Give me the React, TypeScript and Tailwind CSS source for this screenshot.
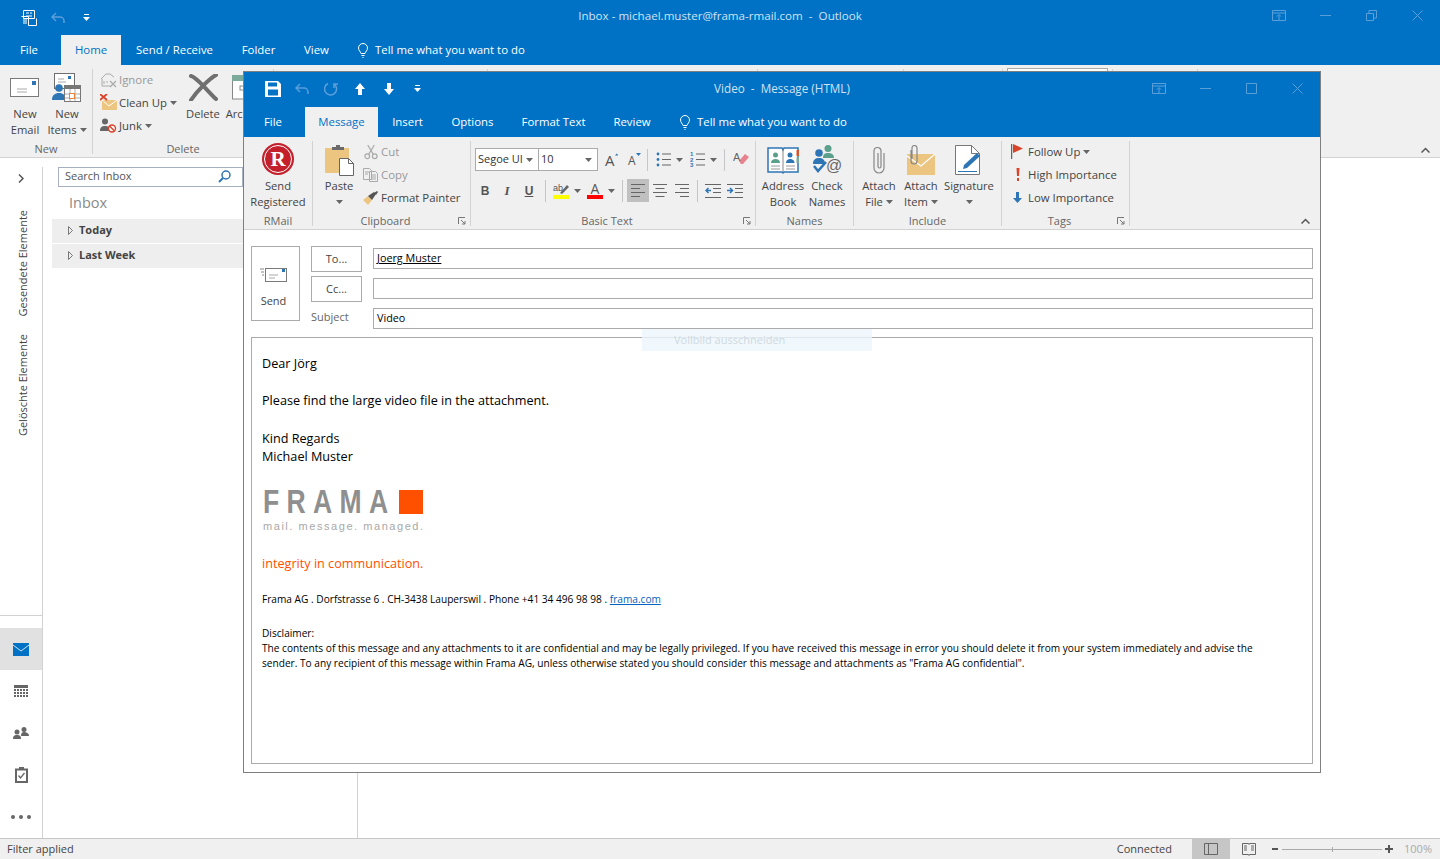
import type { ReactNode } from 'react'

const font = "font-['Open_Sans','Noto_Sans',sans-serif]"

function Caret({ className = 'text-[#666]' }: { className?: string }) {
  return (
    <svg width="7" height="4" viewBox="0 0 7 4" className={`inline-block shrink-0 ${className}`}>
      <path d="M0 0h7L3.500 4z" fill="currentColor" />
    </svg>
  )
}

function Bulb() {
  return (
    <svg width="10" height="15" viewBox="0 0 10 15" fill="none" stroke="#fff" strokeWidth="1">
      <path d="M3 10.500C2.500 8.500.5 7.500.5 5a4.500 4.500 0 019 0c0 2.500-2 3.500-2.500 5.500zM3.500 12.500h3M4.500 14.500h1" />
    </svg>
  )
}

function WinControls({ restore }: { restore?: boolean }) {
  return (
    <div className="flex items-center text-[#5b9fd9]">
      <svg width="14" height="11" viewBox="0 0 14 11" fill="none" stroke="currentColor" className="mr-[34px]">
        <path d="M.5.500h13v10H.500zM.5 3h13M7 10V5M5 6.500l2-2 2 2" />
      </svg>
      <svg width="11" height="1" viewBox="0 0 11 1" className="mr-[35px]"><path d="M0 .5h11" stroke="currentColor" /></svg>
      {restore ? (
        <svg width="11" height="11" viewBox="0 0 11 11" fill="none" stroke="currentColor" className="mr-[35px]">
          <path d="M.5 3.500h7v7h-7zM3 3.500V.5h7.500v7.500H7.500" />
        </svg>
      ) : (
        <svg width="11" height="11" viewBox="0 0 11 11" fill="none" stroke="currentColor" className="mr-[35px]">
          <path d="M.5.500h10v10H.500z" />
        </svg>
      )}
      <svg width="11" height="11" viewBox="0 0 11 11" fill="none" stroke="currentColor">
        <path d="M.5.500l10 10M10.500.500l-10 10" />
      </svg>
    </div>
  )
}

function Tab({ w, active, children }: { w: string; active?: boolean; children: ReactNode }) {
  return (
    <div
      className={`${w} flex h-full items-center justify-center whitespace-nowrap text-[11.4px] ${
        active ? 'bg-[#f0f0f0] text-[#0072c6]' : 'text-white'
      }`}
    >
      {children}
    </div>
  )
}

function TellMe({ pl }: { pl: string }) {
  return (
    <div className={`${pl} flex h-full items-center gap-[7px] whitespace-nowrap text-[11.4px] text-white`}>
      <Bulb />
      <span>Tell me what you want to do</span>
    </div>
  )
}

function Group({
  w,
  label,
  launcher,
  children,
}: {
  w: string
  label?: string
  launcher?: boolean
  children?: ReactNode
}) {
  return (
    <div className={`${w} flex h-full shrink-0 flex-col border-r border-[#d2d2d2]`}>
      <div className="flex min-h-0 flex-1">{children}</div>
      <div className="flex h-[10px] items-center justify-center whitespace-nowrap text-[11px] text-[#666]">
        <span className="flex-1 text-center">{label}</span>
        {launcher && (
          <svg width="8" height="8" viewBox="0 0 8 8" fill="none" stroke="#777" className="mr-[4px] shrink-0">
            <path d="M.5 7V.5H7M3 3l4 4M7 4v3H4" />
          </svg>
        )}
      </div>
    </div>
  )
}

function Big({
  w,
  icon,
  lines,
  caret,
  className = '',
}: {
  w: string
  icon: ReactNode
  lines: string[]
  caret?: boolean
  className?: string
}) {
  return (
    <div className={`${w} ${className} flex shrink-0 flex-col items-center text-[11.2px] leading-[16px] text-[#444]`}>
      <div className="flex h-[37px] items-center justify-center">{icon}</div>
      {lines.map((l, i) => (
        <div key={l} className="flex items-center gap-[3px] whitespace-nowrap">
          {l}
          {caret && i === lines.length - 1 && <Caret />}
        </div>
      ))}
    </div>
  )
}

function Small({
  icon,
  label,
  caret,
  muted,
}: {
  icon: ReactNode
  label: string
  caret?: boolean
  muted?: boolean
}) {
  return (
    <div className={`flex h-[23px] items-center whitespace-nowrap text-[11.4px] ${muted ? 'text-[#999]' : 'text-[#444]'}`}>
      <div className="flex w-[19px] shrink-0 items-center justify-center">{icon}</div>
      <span className="ml-[1px]">{label}</span>
      {caret && <Caret className="ml-[3px] text-[#666]" />}
    </div>
  )
}

const IconEnvelope = (
  <svg width="30" height="20" viewBox="0 0 30 20">
    <rect x=".5" y=".5" width="28" height="18" fill="#fff" stroke="#7a7a7a" />
    <rect x="22" y="3" width="4" height="4" fill="#2e75b6" />
    <path d="M7 11h10M7 14h10" stroke="#aaa" />
  </svg>
)

const IconNewItems = (
  <svg width="30" height="30" viewBox="0 0 30 30">
    <rect x="2.500" y=".5" width="20" height="15" fill="#fff" stroke="#6f6f6f" />
    <rect x="16" y="3" width="3" height="3" fill="#2e75b6" />
    <path d="M6 6h6M6 9h8" stroke="#aaa" />
    <circle cx="7" cy="15" r="3.800" fill="#2e75b6" />
    <path d="M0 27c0-5 3-7 7-7s7 2 7 7z" fill="#2e75b6" />
    <rect x="12.500" y="12.500" width="16" height="16" fill="#fff" stroke="#777" />
    <rect x="12" y="12" width="17" height="4" fill="#777" />
    <path d="M18 16v12M23 16v12M13 21h15M13 25h15" stroke="#aaa" />
    <rect x="17.500" y="20.500" width="5" height="5" fill="#fff" stroke="#e8813a" />
  </svg>
)

const IconDeleteX = (
  <svg width="29" height="27" viewBox="0 0 29 27">
    <path d="M2 2c6 1 18 17 25 23M27 1C20 5 8 17 2 26" fill="none" stroke="#6f6f6f" strokeWidth="4" strokeLinecap="round" />
  </svg>
)

const IconArchive = (
  <svg width="26" height="25" viewBox="0 0 26 25">
    <rect x=".5" y="5" width="25" height="19" fill="#fff" stroke="#888" />
    <rect width="26" height="6" fill="#7ba99a" />
    <rect x="8" y="11" width="8" height="4" fill="none" stroke="#888" />
  </svg>
)

const IconIgnore = (
  <svg width="17" height="16" viewBox="0 0 17 16" fill="none" stroke="#aaa">
    <path d="M1 7l5-5h4l4 3M2 7v7h8M4 9v3M6 10h2" />
    <path d="M10 9l6 6M16 9l-6 6" strokeWidth="1.300" />
  </svg>
)

const IconCleanUp = (
  <svg width="17" height="17" viewBox="0 0 17 17">
    <rect x="2" y="6" width="15" height="10" fill="#ecc581" />
    <path d="M2 6l7 6 8-6" fill="none" stroke="#fff" />
    <path d="M0 0l7 6M7 0L0 6" stroke="#d9442b" strokeWidth="1.800" />
  </svg>
)

const IconJunk = (
  <svg width="17" height="15" viewBox="0 0 17 15">
    <circle cx="5" cy="3.500" r="3" fill="#666" />
    <path d="M0 13c0-4 2-5 5-5s5 1 5 5z" fill="#666" />
    <circle cx="12" cy="10.500" r="3.500" fill="#fff" stroke="#d9442b" strokeWidth="1.400" />
    <path d="M9.500 8l5 5" stroke="#d9442b" strokeWidth="1.400" />
  </svg>
)

const IconRMail = (
  <svg width="32" height="32" viewBox="0 0 32 32" className="mt-[-2px]">
    <circle cx="16" cy="16" r="16" fill="#c4202c" />
    <circle cx="16" cy="16" r="13.500" fill="none" stroke="#fff" />
    <text x="16" y="23" textAnchor="middle" fontFamily="Liberation Serif" fontWeight="700" fontSize="21" fill="#fff">
      R
    </text>
  </svg>
)

const IconPaste = (
  <svg width="29" height="32" viewBox="0 0 29 32">
    <rect y="4" width="24" height="25" fill="#ecc581" />
    <path d="M7 6V3h4V1h4v2h4v3z" fill="#6a6a6a" />
    <path d="M14.500 14.500h9l5 5v12h-14z" fill="#fff" stroke="#666" />
    <path d="M23.500 14.500v5h5" fill="none" stroke="#666" />
  </svg>
)

const IconCut = (
  <svg width="14" height="16" viewBox="0 0 15 16" fill="none" stroke="#aaa" strokeWidth="1.300">
    <circle cx="3.500" cy="12.500" r="2.500" />
    <circle cx="11.500" cy="12.500" r="2.500" />
    <path d="M5 10.500L11 .5M10 10.500L4 .5" />
  </svg>
)

const IconCopy = (
  <svg width="15" height="14" viewBox="0 0 15 14" fill="none" stroke="#aaa">
    <path d="M.5.500h6l2 2v9h-8zM6.500 3.500h6l2 2v8h-8zM2 4h4M2 6h3M8 7h5M8 9h5M8 11h5" />
  </svg>
)

const IconBrush = (
  <svg width="15" height="14" viewBox="0 0 15 14">
    <path d="M0 9l5-4 4 4-4 5z" fill="#ecc581" />
    <path d="M5 5l6-4 2 2-4 6z" fill="#555" />
    <path d="M11 2l3-2 1 1-2 3z" fill="#555" />
  </svg>
)

function Bullets({ numbered }: { numbered?: boolean }) {
  return (
    <svg width="15" height="15" viewBox="0 0 15 15">
      {[2, 7.500, 13].map((y, i) => (
        <g key={y}>
          {numbered ? (
            <text x="0" y={y + 2} fontFamily="Liberation Sans" fontWeight="700" fontSize="6" fill="#2e75b6">
              {i + 1}
            </text>
          ) : (
            <circle cx="2" cy={y} r="1.400" fill="#2e75b6" />
          )}
          <path d={`M6 ${y}h9`} stroke="#666" />
        </g>
      ))}
    </svg>
  )
}

function Align({ kind }: { kind: 'left' | 'center' | 'right' }) {
  const rows =
    kind === 'left'
      ? ['M0 .5h14', 'M0 4.500h9', 'M0 8.500h14', 'M0 12.500h9']
      : kind === 'center'
      ? ['M0 .5h14', 'M2.500 4.500h9', 'M0 8.500h14', 'M2.500 12.500h9']
      : ['M0 .5h14', 'M5 4.500h9', 'M0 8.500h14', 'M5 12.500h9']
  return (
    <svg width="14" height="13" viewBox="0 0 14 13" fill="none" stroke="#666">
      {rows.map((d) => (
        <path key={d} d={d} />
      ))}
    </svg>
  )
}

function Indent({ out }: { out?: boolean }) {
  return (
    <svg width="16" height="14" viewBox="0 0 16 14" fill="none">
      <path d="M0 .5h16M8 4.500h8M8 8.500h8M0 13.500h16" stroke="#666" />
      <path d={out ? 'M6 6.500H1M3.500 4l-2.500 2.500L3.500 9' : 'M0 6.500h5M3 4l2.500 2.500L3 9'} stroke="#2e75b6" strokeWidth="1.500" />
    </svg>
  )
}

const IconBook = (
  <svg width="32" height="30" viewBox="0 0 32 30">
    <path d="M1 3h14l1 2 1-2h14v24H17l-1 1-1-1H1z" fill="#fff" stroke="#2e75b6" strokeWidth="1.500" />
    <rect x="29.500" y="5" width="2.500" height="6" fill="#d9542b" />
    <rect x="29.500" y="12" width="2.500" height="6" fill="#7ba99a" />
    <path d="M16 4v23" stroke="#888" />
    <circle cx="8.500" cy="10" r="2.500" fill="#5aa08a" />
    <path d="M4 18c0-3 2-4 4.500-4S13 15 13 18z" fill="#5aa08a" />
    <circle cx="23" cy="10" r="2.500" fill="#2e75b6" />
    <path d="M19 18c0-3 2-4 4-4s4.500 1 4.500 4z" fill="#2e75b6" />
    <path d="M4 21h9M4 24h9M19 21h9M19 24h9" stroke="#999" />
  </svg>
)

const IconCheck = (
  <svg width="31" height="30" viewBox="0 0 31 30">
    <circle cx="16" cy="3.500" r="3.500" fill="#5aa08a" />
    <path d="M11 13c0-4 2-5 5-5s6 1 6 5z" fill="#5aa08a" />
    <circle cx="7" cy="8" r="3.800" fill="#2e75b6" />
    <path d="M1 19c0-5 3-6 6-6s6 1 6 6z" fill="#2e75b6" />
    <path d="M2 21l4 5 8-9" fill="none" stroke="#2e75b6" strokeWidth="2.500" />
    <text x="22" y="26" textAnchor="middle" fontFamily="Liberation Sans" fontSize="16" fill="#666">
      @
    </text>
  </svg>
)

const IconClip = (
  <svg width="12" height="28" viewBox="0 0 12 28" fill="none" stroke="#888" strokeWidth="1.200">
    <path d="M11 7v15a5 5 0 01-10 0V5a3.500 3.500 0 017 0v15.500a1.500 1.500 0 01-3 0V7" />
  </svg>
)

const IconAttachItem = (
  <svg width="29" height="30" viewBox="0 0 29 30">
    <rect y="9" width="28" height="21" fill="#ecc581" />
    <path d="M0 11l14 10 14-12" fill="none" stroke="#fff" strokeWidth="1.200" />
    <path d="M4 5v11a3 3 0 006 0V3a2.500 2.500 0 00-5 0v11" fill="none" stroke="#888" strokeWidth="1.200" />
  </svg>
)

const IconSignature = (
  <svg width="28" height="30" viewBox="0 0 28 30">
    <path d="M.5.500h16l8 8v21H.500z" fill="#fff" stroke="#777" />
    <path d="M16.500.500v8h8" fill="none" stroke="#777" />
    <path d="M9 20l13-12 3 3-13 12-4 1z" fill="#2e75b6" />
    <path d="M3 26.500h19" stroke="#2e75b6" />
  </svg>
)

function RibbonStack({ className = '', children }: { className?: string; children: ReactNode }) {
  return <div className={`flex flex-col ${className}`}>{children}</div>
}

function Sep() {
  return <div className="h-[22px] w-px shrink-0 bg-[#c6c6c6]" />
}

function MessageWindow() {
  return (
    <div className="absolute left-[243px] top-[71px] flex h-[702px] w-[1078px] flex-col border border-[#7f7f7f] bg-white">
      <div className="grid h-[35px] shrink-0 grid-cols-[1fr_auto_1fr] items-center bg-[#0072c6] pb-[2px]">
        <div className="flex items-center pl-[21px]">
          <svg width="16" height="16" viewBox="0 0 16 16" fill="#fff">
            <path d="M0 0h13l3 3v13H0zm3 1.500v4h9v-4zm0 7v6h10v-6z" fillRule="evenodd" />
          </svg>
          <svg width="14" height="12" viewBox="0 0 14 12" fill="none" stroke="#5b9fd9" strokeWidth="1.500" className="ml-[14px]">
            <path d="M5 1L1 5l4 4M1 5h8a4 4 0 014 4v2" />
          </svg>
          <svg width="14" height="14" viewBox="0 0 14 14" fill="none" stroke="#5b9fd9" strokeWidth="1.500" className="ml-[15px] -scale-x-100">
            <path d="M4 2a6 6 0 106-.5M4 6V2H0" />
          </svg>
          <svg width="10" height="12" viewBox="0 0 10 12" fill="#fff" className="ml-[17px]">
            <path d="M5 0l5 6H7v6H3V6H0z" />
          </svg>
          <svg width="10" height="12" viewBox="0 0 10 12" fill="#fff" className="ml-[19px]">
            <path d="M5 12L0 6h3V0h4v6h3z" />
          </svg>
          <svg width="7" height="8" viewBox="0 0 7 8" fill="#fff" className="ml-[20px]">
            <path d="M1 0h5v1H1zM0 3h7L3.500 7z" />
          </svg>
        </div>
        <div className="whitespace-pre text-[11.7px] text-[#d0e3f4]">Video  -  Message (HTML)</div>
        <div className="flex justify-end pb-[1px] pr-[17px]">
          <WinControls />
        </div>
      </div>

      <div className="flex h-[30px] shrink-0 bg-[#0072c6]">
        <Tab w="w-[61px] pr-[3px]">File</Tab>
        <Tab w="w-[73px]" active>Message</Tab>
        <Tab w="w-[59px]">Insert</Tab>
        <Tab w="w-[71px]">Options</Tab>
        <Tab w="w-[91px]">Format Text</Tab>
        <Tab w="w-[66px]">Review</Tab>
        <TellMe pl="pl-[15px]" />
      </div>

      <div className="flex h-[93px] shrink-0 items-stretch border-b border-[#d2d2d2] bg-[#f0f0f0] pb-[3px] pt-[4px]">
        <Group w="w-[69px]" label="RMail">
          <Big w="w-[68px]" icon={IconRMail} lines={['Send', 'Registered']} />
        </Group>
        <Group w="w-[158px]" label="Clipboard" launcher>
          <RibbonStack className="ml-[4px] w-[44px] items-center text-[11.2px] leading-[16px] text-[#444]">
            <div className="flex h-[37px] items-center">{IconPaste}</div>
            <div>Paste</div>
            <div className="flex h-[16px] items-center"><Caret /></div>
          </RibbonStack>
          <RibbonStack className="mt-[-1px]">
            <Small muted icon={IconCut} label="Cut" />
            <Small muted icon={IconCopy} label="Copy" />
            <Small icon={IconBrush} label="Format Painter" />
          </RibbonStack>
        </Group>
        <Group w="w-[285px]" label="Basic Text" launcher>
          <RibbonStack className="pl-[4px] pt-[7px]">
            <div className="flex h-[23px] items-center">
              <div className="flex h-[23px] w-[64px] shrink-0 items-center justify-between whitespace-nowrap border border-[#ababab] bg-white pl-[2px] pr-[5px] text-[11px] text-[#333]">
                Segoe UI <Caret />
              </div>
              <div className="ml-[-1px] flex h-[23px] w-[60px] shrink-0 items-center justify-between border border-[#ababab] bg-white pl-[2px] pr-[5px] text-[11px] text-[#333]">
                10 <Caret />
              </div>
              <div className="ml-[7px] flex w-[13px] shrink-0 items-start">
                <span className="text-[15px] leading-[20px] text-[#555]">A</span>
                <svg width="5" height="3" viewBox="0 0 5 3" className="mt-[3px]"><path d="M0 3l2.500-3L5 3z" fill="#2e75b6" /></svg>
              </div>
              <div className="ml-[10px] flex w-[13px] shrink-0 items-start">
                <span className="mt-[3px] text-[12px] leading-[16px] text-[#555]">A</span>
                <svg width="5" height="3" viewBox="0 0 5 3" className="mt-[3px]"><path d="M0 0l2.500 3L5 0z" fill="#2e75b6" /></svg>
              </div>
              <div className="ml-[6px]"><Sep /></div>
              <div className="ml-[8px]"><Bullets /></div>
              <Caret className="ml-[5px] text-[#666]" />
              <div className="ml-[7px]"><Bullets numbered /></div>
              <Caret className="ml-[5px] text-[#666]" />
              <div className="ml-[7px]"><Sep /></div>
              <svg width="16" height="15" viewBox="0 0 16 15" className="ml-[8px]">
                <path d="M6 9l6-7 4 3-6 7H8z" fill="#e8828e" />
                <text x="0" y="9" fontFamily="Liberation Sans" fontSize="11" fill="#666">A</text>
              </svg>
            </div>
            <div className="mt-[8px] flex h-[23px] items-center text-[#555]">
              <span className="ml-[2px] w-[16px] text-center font-['Liberation_Sans'] text-[12px] font-bold">B</span>
              <span className="ml-[6px] w-[16px] text-center font-['Liberation_Serif'] text-[13px] font-bold italic">I</span>
              <span className="ml-[6px] w-[16px] text-center font-['Liberation_Sans'] text-[12px] font-bold underline">U</span>
              <div className="ml-[8px]"><Sep /></div>
              <svg width="16" height="17" viewBox="0 0 16 17" className="ml-[7px]">
                <text x="0" y="9" fontFamily="Liberation Sans" fontSize="9" fill="#555">ab</text>
                <path d="M7 11l7-8 2 2-7 7z" fill="#666" />
                <rect y="13" width="16" height="4" fill="#ffff00" />
              </svg>
              <Caret className="ml-[5px] text-[#666]" />
              <div className="ml-[6px] flex h-[17px] w-[16px] shrink-0 flex-col items-center justify-end">
                <span className="text-[14px] leading-[13px] text-[#555]">A</span>
                <div className="h-[4px] w-full shrink-0 bg-[#ff0000]" />
              </div>
              <Caret className="ml-[5px] text-[#666]" />
              <div className="ml-[7px]"><Sep /></div>
              <div className="ml-[4px] flex h-[23px] w-[22px] shrink-0 items-center justify-center bg-[#c0c0c0]"><Align kind="left" /></div>
              <div className="flex w-[22px] shrink-0 justify-center"><Align kind="center" /></div>
              <div className="flex w-[22px] shrink-0 justify-center"><Align kind="right" /></div>
              <div className="ml-[4px]"><Sep /></div>
              <div className="ml-[7px]"><Indent out /></div>
              <div className="ml-[6px]"><Indent /></div>
            </div>
          </RibbonStack>
        </Group>
        <Group w="w-[98px]" label="Names">
          <Big w="w-[54px]" icon={IconBook} lines={['Address', 'Book']} />
          <Big w="w-[34px]" icon={IconCheck} lines={['Check', 'Names']} />
        </Group>
        <Group w="w-[148px]" label="Include">
          <Big w="w-[50px]" icon={IconClip} lines={['Attach', 'File']} caret />
          <Big w="w-[34px]" icon={IconAttachItem} lines={['Attach', 'Item']} caret />
          <RibbonStack className="w-[62px] items-center text-[11.2px] leading-[16px] text-[#444]">
            <div className="flex h-[37px] items-center">{IconSignature}</div>
            <div>Signature</div>
            <div className="flex h-[16px] items-center"><Caret /></div>
          </RibbonStack>
        </Group>
        <Group w="w-[128px]" label="Tags" launcher>
          <RibbonStack className="mt-[-1px] pl-[6px]">
            <Small
              caret
              label="Follow Up"
              icon={
                <svg width="14" height="15" viewBox="0 0 14 15">
                  <path d="M.5 0v15" stroke="#666" strokeWidth="1.500" />
                  <path d="M2 0l10 4.500L2 9z" fill="#d9442b" />
                </svg>
              }
            />
            <Small
              label="High Importance"
              icon={
                <svg width="4" height="13" viewBox="0 0 4 13" fill="#d9442b">
                  <path d="M.5 0h3L3 8H1zM1 10h2v3H1z" />
                </svg>
              }
            />
            <Small
              label="Low Importance"
              icon={
                <svg width="9" height="11" viewBox="0 0 9 11" fill="#2e75b6">
                  <path d="M3 0h3v6h3l-4.500 5L0 6h3z" />
                </svg>
              }
            />
          </RibbonStack>
        </Group>
        <div className="flex flex-1 items-end justify-end pb-[2px] pr-[10px]">
          <svg width="9" height="6" viewBox="0 0 9 6" fill="none" stroke="#555" strokeWidth="1.500"><path d="M.5 5.500l4-4 4 4" /></svg>
        </div>
      </div>

      <div className="flex flex-1 flex-col px-[7px] pb-[8px] pt-[16px]">
        <div className="flex h-[83px] shrink-0">
          <div className="flex h-[75px] w-[49px] shrink-0 flex-col items-center border border-[#ababab] pr-[4px] text-[11px] text-[#444]">
            <svg width="28" height="16" viewBox="0 0 28 16" className="mt-[20px] shrink-0">
              <path d="M0 2h4M1 5h3M2 8h2" stroke="#888" />
              <rect x="5.500" y="1.500" width="21" height="13" fill="#fff" stroke="#7a7a7a" />
              <rect x="22" y="2" width="3" height="3" fill="#2e75b6" />
              <path d="M9 8h9M9 11h6" stroke="#aaa" />
            </svg>
            <span className="mt-[10px]">Send</span>
          </div>
          <div className="ml-[11px] flex w-[51px] shrink-0 flex-col text-[11px] text-[#444]">
            <div className="flex h-[26px] shrink-0 items-center justify-center border border-[#ababab]">To...</div>
            <div className="mt-[4px] flex h-[26px] shrink-0 items-center justify-center border border-[#ababab]">Cc...</div>
            <div className="mt-[7px] h-[16px] shrink-0 text-[11px] leading-[16px] text-[#666]">Subject</div>
          </div>
          <div className="ml-[11px] flex flex-1 flex-col pt-[2px] text-[10.8px] text-black">
            <div className="flex h-[21px] shrink-0 items-center border border-[#ababab] pl-[3px] underline">Joerg Muster</div>
            <div className="mt-[9px] h-[21px] shrink-0 border border-[#ababab]" />
            <div className="mt-[9px] flex h-[21px] shrink-0 items-center border border-[#ababab] pl-[3px]">Video</div>
          </div>
        </div>

        <div className="mt-[8px] flex-1 border border-[#ababab] pl-[10px] pt-[16px] text-[12.65px] leading-[18px] text-black">
          <div>Dear Jörg</div>
          <div className="mt-[19px]">Please find the large video file in the attachment.</div>
          <div className="mt-[20px]">Kind Regards</div>
          <div>Michael Muster</div>

          <div className="mt-[24px] w-[161px]">
            <div className="flex h-[26px] items-center justify-between">
              <div className="w-[135px] shrink-0 pl-[1px]">
                <span className="inline-block origin-left scale-x-[0.78] whitespace-nowrap font-['Liberation_Sans'] text-[34px] font-bold leading-[26px] tracking-[9.4px] text-[#8f8f8f]">FRAMA</span>
              </div>
              <div className="h-[24px] w-[24px] shrink-0 bg-[#ff5000]" />
            </div>
            <div className="mt-[4px] whitespace-nowrap pl-[1px] font-['Liberation_Sans'] text-[11px] leading-[14px] tracking-[1.55px] text-[#a8a8a8]">
              mail. message. managed.
            </div>
          </div>

          <div className="mt-[21px] text-[#ff5000]">integrity in communication.</div>

          <div className="mt-[20px] whitespace-nowrap text-[10.13px] leading-[15px]">
            Frama AG . Dorfstrasse 6 . CH-3438 Lauperswil . Phone +41 34 496 98 98 .{' '}
            <span className="text-[#0563c1] underline">frama.com</span>
          </div>
          <div className="mt-[19px] whitespace-nowrap text-[10.13px] leading-[15px]">
            <div>Disclaimer:</div>
            <div>
              The contents of this message and any attachments to it are confidential and may be legally privileged. If you have received this message in error you should delete it from your system immediately and advise the
            </div>
            <div>
              sender. To any recipient of this message within Frama AG, unless otherwise stated you should consider this message and attachments as "Frama AG confidential".
            </div>
          </div>
        </div>
      </div>

      <div className="absolute left-[398px] top-[257px] flex h-[22px] w-[230px] items-center bg-[#eef6fd]/80 pl-[32px] text-[11px] text-[#cfd8e0]">
        Vollbild ausschneiden
      </div>
    </div>
  )
}

export default function App() {
  return (
    <div className={`${font} relative flex h-[859px] w-[1440px] flex-col overflow-hidden bg-white`}>
      <div className="grid h-[35px] shrink-0 grid-cols-[1fr_auto_1fr] items-center bg-[#0072c6]">
        <div className="flex items-center pl-[21px]">
          <svg width="16" height="16" viewBox="0 0 16 16" fill="none" stroke="#fff">
            <path d="M2.500.500h11v8h-11zM5 3h3M9 3h2M5 6h6M.5 6.500h7v9h8v-7" />
            <path d="M2 9h4M2 11h4M2 13h4" />
          </svg>
          <svg width="14" height="12" viewBox="0 0 14 12" fill="none" stroke="#5b9fd9" strokeWidth="1.500" className="ml-[14px]">
            <path d="M5 1L1 5l4 4M1 5h8a4 4 0 014 4v2" />
          </svg>
          <svg width="7" height="8" viewBox="0 0 7 8" fill="#fff" className="ml-[18px]">
            <path d="M1 0h5v1H1zM0 3h7L3.500 7z" />
          </svg>
        </div>
        <div className="whitespace-pre pb-[3px] text-[11.6px] text-[#d0e3f4]">Inbox - michael.muster@frama-rmail.com  -  Outlook</div>
        <div className="flex justify-end pb-[4px] pr-[17px]">
          <WinControls restore />
        </div>
      </div>

      <div className="flex h-[30px] shrink-0 bg-[#0072c6]">
        <Tab w="w-[61px] pr-[3px]">File</Tab>
        <Tab w="w-[60px]" active>Home</Tab>
        <Tab w="w-[107px]">Send / Receive</Tab>
        <Tab w="w-[61px]">Folder</Tab>
        <Tab w="w-[55px]">View</Tab>
        <TellMe pl="pl-[14px]" />
      </div>

      <div className="flex h-[93px] shrink-0 border-b border-[#d2d2d2] bg-[#f0f0f0] pb-[3px] pt-[4px]">
        <Group w="w-[93px]" label="New">
          <Big w="w-[42px]" className="ml-[4px]" icon={IconEnvelope} lines={['New', 'Email']} />
          <Big w="w-[42px]" icon={IconNewItems} lines={['New', 'Items']} caret />
        </Group>
        <Group w="w-[181px]" label="Delete">
          <RibbonStack className="ml-[6px] mt-[-1px] w-[82px]">
            <Small muted icon={IconIgnore} label="Ignore" />
            <Small caret icon={IconCleanUp} label="Clean Up" />
            <Small caret icon={IconJunk} label="Junk" />
          </RibbonStack>
          <Big w="w-[44px]" icon={IconDeleteX} lines={['Delete']} />
          <Big w="w-[44px]" className="ml-[-2px]" icon={IconArchive} lines={['Archive']} />
        </Group>
        <Group w="w-[214px]" />
        <Group w="w-[270px]" />
        <Group w="w-[146px]" />
        <Group w="w-[99px]" />
        <Group w="w-[110px]">
          <div className="ml-[4px] mt-[-1px] h-[23px] w-[101px] border border-[#ababab] bg-white" />
        </Group>
        <Group w="w-[85px]" />
        <div className="flex flex-1 items-end justify-end pb-[1px] pr-[10px]">
          <svg width="9" height="6" viewBox="0 0 9 6" fill="none" stroke="#555" strokeWidth="1.500"><path d="M.5 5.500l4-4 4 4" /></svg>
        </div>
      </div>

      <div className="flex min-h-0 flex-1">
        <div className="mt-[9px] flex w-[43px] shrink-0 flex-col border-r border-[#d2d2d2]">
          <div className="flex h-[24px] items-center justify-center pb-[1px]">
            <svg width="6" height="9" viewBox="0 0 6 9" fill="none" stroke="#555" strokeWidth="1.500"><path d="M1 .5l4 4-4 4" /></svg>
          </div>
          <div className="mt-[19px] flex flex-col items-center gap-[18px] pl-[3px] text-[11px] leading-none text-[#444]">
            <span className="rotate-180 whitespace-nowrap [writing-mode:vertical-rl]">Gesendete Elemente</span>
            <span className="rotate-180 whitespace-nowrap [writing-mode:vertical-rl]">Gelöschte Elemente</span>
          </div>
          <div className="flex-1" />
          <div className="h-[13px] border-t border-[#d2d2d2]" />
          <div className="flex h-[42px] items-center justify-center bg-[#e1e1e1]">
            <svg width="16" height="13" viewBox="0 0 16 13">
              <rect width="16" height="13" fill="#0072c6" />
              <path d="M0 2l8 6 8-6" fill="none" stroke="#cfe2f3" />
            </svg>
          </div>
          <div className="flex h-[42px] items-center justify-center">
            <svg width="14" height="12" viewBox="0 0 14 12" fill="#666">
              <path d="M0 0h14v3H0z" />
              <path d="M0 4h2v2H0zM3 4h2v2H3zM6 4h2v2H6zM9 4h2v2H9zM12 4h2v2h-2zM0 7h2v2H0zM3 7h2v2H3zM6 7h2v2H6zM9 7h2v2H9zM12 7h2v2h-2zM0 10h2v2H0zM3 10h2v2H3zM6 10h2v2H6zM9 10h2v2H9zM12 10h2v2h-2z" />
            </svg>
          </div>
          <div className="flex h-[42px] items-center justify-center">
            <svg width="16" height="12" viewBox="0 0 16 12" fill="#666">
              <circle cx="11" cy="2.500" r="2.500" />
              <path d="M8 9c0-3 1-4 3-4s5 1 5 4z" />
              <circle cx="4" cy="5" r="2.500" />
              <path d="M0 12c0-3 1-4 4-4s4 1 4 4z" />
            </svg>
          </div>
          <div className="flex h-[42px] items-center justify-center">
            <svg width="13" height="16" viewBox="0 0 13 16" fill="none">
              <path d="M1 2.500h11v12.500H1z" stroke="#666" strokeWidth="2" />
              <path d="M4 2h5V0H4z" fill="#666" />
              <path d="M3.500 8.500l2 2.500 4-5" stroke="#666" strokeWidth="1.300" />
            </svg>
          </div>
          <div className="flex h-[42px] items-center justify-center gap-[4px]">
            <div className="h-[4px] w-[4px] rounded-full bg-[#666]" />
            <div className="h-[4px] w-[4px] rounded-full bg-[#666]" />
            <div className="h-[4px] w-[4px] rounded-full bg-[#666]" />
          </div>
        </div>

        <div className="flex w-[315px] shrink-0 flex-col border-r border-[#d2d2d2] pt-[9px]">
          <div className="ml-[15px] flex h-[20px] w-[185px] items-center justify-between border border-[#a6b0c0] pb-[1px] pl-[6px] pr-[11px] text-[11px] text-[#555]">
            Search Inbox
            <svg width="13" height="13" viewBox="0 0 13 13" fill="none" stroke="#2e75b6" strokeWidth="1.500">
              <circle cx="8" cy="5" r="4" />
              <path d="M5 8l-4 4" strokeWidth="2" />
            </svg>
          </div>
          <div className="ml-[26px] flex h-[32px] items-center text-[14.5px] text-[#8a8a8a]">Inbox</div>
          <div className="ml-[9px] flex h-[24px] items-center bg-[#eeeeee] pb-[1px] pl-[16px] text-[11px] font-bold text-[#444]">
            <svg width="5" height="9" viewBox="0 0 5 9" fill="none" stroke="#777" className="mr-[6px]"><path d="M.5.500l4 4-4 4z" /></svg>
            Today
          </div>
          <div className="ml-[9px] mt-px flex h-[24px] items-center bg-[#eeeeee] pb-[1px] pl-[16px] text-[11px] font-bold text-[#444]">
            <svg width="5" height="9" viewBox="0 0 5 9" fill="none" stroke="#777" className="mr-[6px]"><path d="M.5.500l4 4-4 4z" /></svg>
            Last Week
          </div>
        </div>
        <div className="flex-1" />
      </div>

      <div className="flex h-[21px] shrink-0 items-center border-t border-[#c6c6c6] bg-[#f0f0f0] pl-[7px] text-[11px] text-[#444]">
        <span>Filter applied</span>
        <div className="flex-1" />
        <span className="mr-[20px]">Connected</span>
        <div className="flex h-full w-[38px] items-center justify-center bg-[#c6c6c6]">
          <svg width="14" height="12" viewBox="0 0 14 12" fill="none" stroke="#666"><path d="M.5.500h13v11H.500zM4.500.500v11" /></svg>
        </div>
        <svg width="14" height="13" viewBox="0 0 14 13" fill="none" stroke="#666" className="ml-[12px]">
          <path d="M.5.500h6l.5 1 .5-1h6v11h-6l-.5 1-.5-1h-6zM2 3h3M2 5h3M2 7h3M9 3h3M9 5h3M9 7h3" />
        </svg>
        <div className="ml-[16px] h-[2px] w-[6px] bg-[#555]" />
        <div className="relative ml-[4px] h-px w-[100px] bg-[#aaa]">
          <div className="absolute left-[50px] top-[-2px] h-[5px] w-px bg-[#aaa]" />
        </div>
        <svg width="8" height="8" viewBox="0 0 8 8" fill="#555" className="ml-[3px]"><path d="M3 0h2v3h3v2H5v3H3V5H0V3h3z" /></svg>
        <span className="ml-[11px] mr-[8px] text-[#aaa]">100%</span>
      </div>

      <MessageWindow />
    </div>
  )
}
